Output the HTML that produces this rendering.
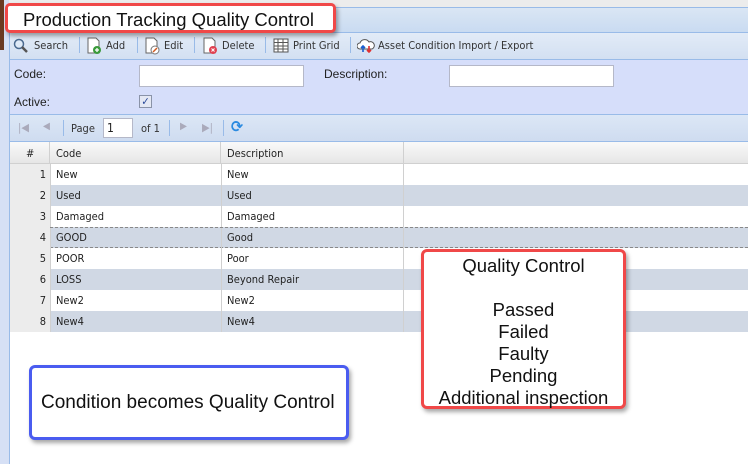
<!DOCTYPE html>
<html><head><style>
*{margin:0;padding:0;box-sizing:border-box}
body{width:748px;height:464px;position:relative;overflow:hidden;background:#fff;font-family:"DejaVu Sans Condensed","Liberation Sans",sans-serif;font-size:11px;color:#222}
.a{position:absolute}
.tb span{position:absolute;top:39px;font-size:11px;color:#333}
.sep{position:absolute;top:37px;width:1px;height:16px;background:#99bbe8}
.row{position:absolute;left:10px;width:738px;height:21px;font-size:11px}
.row div{position:absolute;top:0;height:21px;line-height:21px}
.n{left:0;width:40px;text-align:right;padding-right:4px;background:#ececec}
.c{left:46px}.d{left:217px}
.v1{position:absolute;left:40px;top:0;width:1px;height:21px;background:#d0d0d0}
.v2{position:absolute;left:211px;top:0;width:1px;height:21px;background:#d0d0d0}
.v3{position:absolute;left:393px;top:0;width:1px;height:21px;background:#d0d0d0}
.box{font-family:"Liberation Sans",sans-serif;color:#111;background:#fff;box-shadow:2px 3px 4px rgba(0,0,0,.35)}
</style></head><body>
<div class="a" style="left:0;top:0;width:748px;height:8px;background:#ececec"></div>
<div class="a" style="left:0;top:0;width:9px;height:464px;background:#d6e0f5"></div>
<div class="a" style="left:0;top:0;width:4px;height:50px;background:#6b3a22"></div>
<div class="a" style="left:9px;top:7px;width:1px;height:457px;background:#99bbe8"></div>
<div class="a" style="left:10px;top:7px;width:738px;height:25px;background:linear-gradient(#dae6f4,#c9dbf1);border-top:1px solid #99bbe8"></div>
<div class="a" style="left:10px;top:32px;width:738px;height:28px;background:linear-gradient(#e2ebf7,#d3e0f2);border-top:1px solid #99bbe8;border-bottom:1px solid #99bbe8"></div>
<div class="tb">
<svg class="a" style="left:13px;top:38px" width="16" height="16"><circle cx="6" cy="6" r="4.5" fill="#dfeaf7" stroke="#4a6a90" stroke-width="1.5"/><path d="M9 9l5 5" stroke="#555" stroke-width="2.5"/></svg>
<span style="left:34px">Search</span><div class="sep" style="left:79px"></div>
<svg class="a" style="left:86px;top:37px" width="16" height="18"><path d="M2 1h8l3 3v12H2z" fill="#fff" stroke="#666"/><circle cx="11" cy="13" r="4" fill="#3a9a3a"/><path d="M11 11v4M9 13h4" stroke="#fff" stroke-width="1.3"/></svg>
<span style="left:106px">Add</span><div class="sep" style="left:137px"></div>
<svg class="a" style="left:144px;top:37px" width="16" height="18"><path d="M2 1h8l3 3v12H2z" fill="#fff" stroke="#666"/><circle cx="11" cy="13" r="4" fill="#fff" stroke="#777"/><path d="M9 15l4-4" stroke="#d05a20" stroke-width="1.5"/></svg>
<span style="left:164px">Edit</span><div class="sep" style="left:194px"></div>
<svg class="a" style="left:202px;top:37px" width="16" height="18"><path d="M2 1h8l3 3v12H2z" fill="#fff" stroke="#666"/><circle cx="11" cy="13" r="4" fill="#e04050"/><path d="M9.5 11.5l3 3M12.5 11.5l-3 3" stroke="#fff"/></svg>
<span style="left:222px">Delete</span><div class="sep" style="left:265px"></div>
<svg class="a" style="left:273px;top:38px" width="16" height="15"><rect x="1" y="1" width="14" height="13" fill="#fff" stroke="#555"/><path d="M1 4.5h14M1 8h14M1 11h14M5 1v13M10 1v13" stroke="#555"/></svg>
<span style="left:293px">Print Grid</span><div class="sep" style="left:350px"></div>
<svg class="a" style="left:357px;top:38px" width="18" height="15"><path d="M3 11a3 3 0 010-6a5 5 0 019-1a3.5 3.5 0 013 7z" fill="#fff" stroke="#555"/><path d="M6 14V8M4 10l2-2 2 2" stroke="#1a5fd0" stroke-width="1.6" fill="none"/><path d="M12 8v6M10 12l2 2 2-2" stroke="#e03030" stroke-width="1.6" fill="none"/></svg>
<span style="left:378px">Asset Condition Import / Export</span>
</div>
<div class="a" style="left:10px;top:60px;width:738px;height:55px;background:#d6defa;border-bottom:1px solid #99bbe8"></div>
<div class="a" style="left:14px;top:67px;font-family:'Liberation Sans',sans-serif;font-size:12px">Code:</div>
<div class="a" style="left:139px;top:65px;width:165px;height:22px;background:#fff;border:1px solid #b5b8c8"></div>
<div class="a" style="left:324px;top:67px;font-family:'Liberation Sans',sans-serif;font-size:12px">Description:</div>
<div class="a" style="left:449px;top:65px;width:165px;height:22px;background:#fff;border:1px solid #b5b8c8"></div>
<div class="a" style="left:14px;top:95px;font-family:'Liberation Sans',sans-serif;font-size:12px">Active:</div>
<div class="a" style="left:139px;top:95px;width:13px;height:13px;background:#e4e8f4;border:1px solid #8a93a8;font-size:11px;line-height:11px;text-align:center;color:#2a4a9a">✓</div>
<div class="a" style="left:10px;top:115px;width:738px;height:27px;background:linear-gradient(#dce7f6,#cfdcf0);border-bottom:1px solid #99bbe8"></div>
<div class="a" style="left:18px;top:121px;color:#aab;font-size:11px">|◀</div>
<div class="a" style="left:43px;top:121px;color:#aab;font-size:10px">◀</div>
<div class="sep" style="left:63px;top:120px"></div>
<div class="a" style="left:71px;top:122px;color:#333">Page</div>
<div class="a" style="left:103px;top:118px;width:30px;height:20px;background:#fff;border:1px solid #b5b8c8;padding:2px 3px;font-size:12px">1</div>
<div class="a" style="left:141px;top:122px;color:#333">of 1</div>
<div class="sep" style="left:169px;top:120px"></div>
<div class="a" style="left:180px;top:121px;color:#aab;font-size:10px">▶</div>
<div class="a" style="left:202px;top:121px;color:#aab;font-size:11px">▶|</div>
<div class="sep" style="left:223px;top:120px"></div>
<div class="a" style="left:231px;top:117px;color:#2a8ae0;font-size:16px;font-weight:bold">⟳</div>
<div class="a" style="left:10px;top:142px;width:738px;height:22px;background:linear-gradient(#f9f9f9,#e6e6e6);border-bottom:1px solid #d0d0d0"></div>
<div class="a" style="left:26px;top:147px">#</div>
<div class="a" style="left:56px;top:147px">Code</div>
<div class="a" style="left:227px;top:147px">Description</div>
<div class="a" style="left:49px;top:142px;width:1px;height:22px;background:#d0d0d0"></div>
<div class="a" style="left:220px;top:142px;width:1px;height:22px;background:#d0d0d0"></div>
<div class="a" style="left:403px;top:142px;width:1px;height:22px;background:#d0d0d0"></div>

<div class="row" style="top:164px;background:#fff"><div class="n">1</div><div class="c">New</div><div class="d">New</div><span class="v1"></span><span class="v2"></span><span class="v3"></span></div>
<div class="row" style="top:185px;background:#d0d8e4"><div class="n">2</div><div class="c">Used</div><div class="d">Used</div><span class="v1"></span><span class="v2"></span><span class="v3"></span></div>
<div class="row" style="top:206px;background:#fff"><div class="n">3</div><div class="c">Damaged</div><div class="d">Damaged</div><span class="v1"></span><span class="v2"></span><span class="v3"></span></div>
<div class="row" style="top:227px;background:#d0d8e4;border-top:1px dashed #888;border-bottom:1px dashed #888"><div class="n" style="top:-1px">4</div><div class="c" style="top:-1px">GOOD</div><div class="d" style="top:-1px">Good</div><span class="v1"></span><span class="v2"></span><span class="v3"></span></div>
<div class="row" style="top:248px;background:#fff"><div class="n">5</div><div class="c">POOR</div><div class="d">Poor</div><span class="v1"></span><span class="v2"></span><span class="v3"></span></div>
<div class="row" style="top:269px;background:#d0d8e4"><div class="n">6</div><div class="c">LOSS</div><div class="d">Beyond Repair</div><span class="v1"></span><span class="v2"></span><span class="v3"></span></div>
<div class="row" style="top:290px;background:#fff"><div class="n">7</div><div class="c">New2</div><div class="d">New2</div><span class="v1"></span><span class="v2"></span><span class="v3"></span></div>
<div class="row" style="top:311px;background:#d0d8e4"><div class="n">8</div><div class="c">New4</div><div class="d">New4</div><span class="v1"></span><span class="v2"></span><span class="v3"></span></div>

<div class="a box" style="left:5px;top:3px;width:331px;height:30px;border:3px solid #f04848;border-radius:5px;font-size:18.5px;padding:3px 0 0 15px">Production Tracking Quality Control</div>
<div class="a box" style="left:421px;top:249px;width:205px;height:160px;border:3px solid #f04848;border-radius:6px;font-size:18.5px;line-height:22px;text-align:center;padding-top:3px">Quality Control<br><br>Passed<br>Failed<br>Faulty<br>Pending<br>Additional inspection</div>
<div class="a box" style="left:29px;top:365px;width:320px;height:75px;border:3px solid #4a5cf0;border-radius:6px;font-size:19px;line-height:69px;padding-left:9px">Condition becomes Quality Control</div>
</body></html>
